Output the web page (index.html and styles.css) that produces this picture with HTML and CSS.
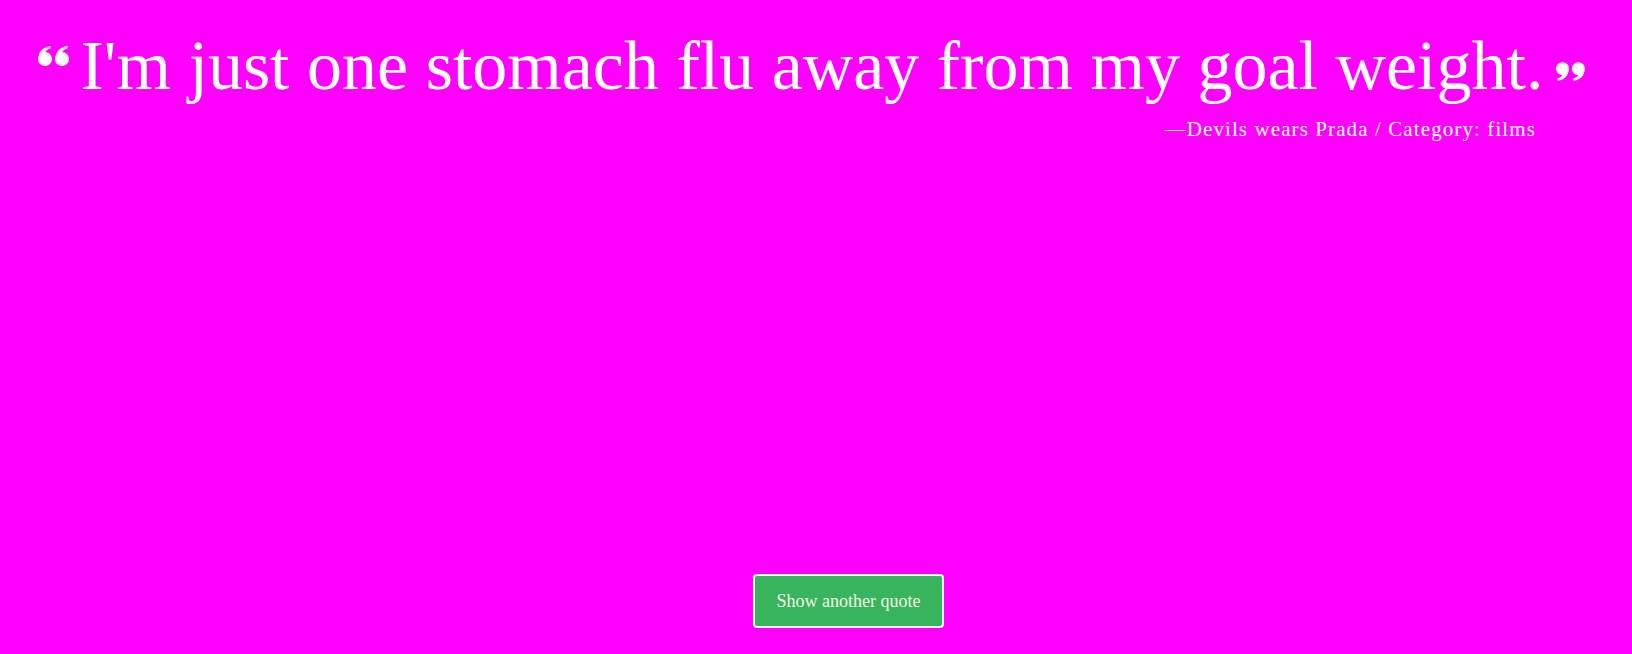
FILE: index.html
```html
<!DOCTYPE html>
<html lang="en">
<head>
<meta charset="utf-8">
<title>Random Quote</title>
<link rel="stylesheet" href="styles.css">
</head>
<body>
<main class="page">
  <blockquote class="quote">
    <p class="quote-text"><svg class="mark mark-left" viewBox="0 0 31 20" width="31" height="20" aria-hidden="true"><g fill="#fff"><circle cx="7" cy="13" r="7"/><path d="M0.4 12.5C0.6 5.5 5 1.2 12.5 0L12.8 2.2C8.5 3.6 6 6.4 5.8 9.5Z"/><circle cx="24" cy="13" r="7"/><path d="M17.4 12.5C17.6 5.5 22 1.2 29.5 0L29.8 2.2C25.5 3.6 23 6.4 22.8 9.5Z"/></g></svg><span class="quote-body">I'm just one stomach flu away from my goal weight.</span><svg class="mark mark-right" viewBox="0 0 31 20" width="29" height="21" aria-hidden="true"><g fill="#fff" transform="rotate(180 15.5 10)"><circle cx="7" cy="13" r="7"/><path d="M0.4 12.5C0.6 5.5 5 1.2 12.5 0L12.8 2.2C8.5 3.6 6 6.4 5.8 9.5Z"/><circle cx="24" cy="13" r="7"/><path d="M17.4 12.5C17.6 5.5 22 1.2 29.5 0L29.8 2.2C25.5 3.6 23 6.4 22.8 9.5Z"/></g></svg></p>
    <footer class="quote-source">—Devils wears Prada / Category: films</footer>
  </blockquote>
  <div class="actions">
    <button class="btn-next" type="button">Show another quote</button>
  </div>
</main>
</body>
</html>
```
FILE: styles.css
```css
html, body {
  margin: 0;
  padding: 0;
  height: 100%;
}
body {
  background: #ff00ff;
  color: #ffffff;
  font-family: "Liberation Serif", "Times New Roman", serif;
}
.page {
  height: 100vh;
  display: flex;
  flex-direction: column;
  box-sizing: border-box;
  padding-bottom: 26px;
}
.quote {
  margin: 0;
  padding: 0;
}
.quote-text {
  margin: 0;
  padding-top: 24px;
  padding-right: 9px;
  font-size: 70px;
  line-height: 84px;
  text-align: center;
  white-space: nowrap;
}
.mark {
  display: inline-block;
}
.mark-left {
  vertical-align: 23px;
  margin-right: 12px;
}
.mark-right {
  vertical-align: 7px;
  margin-left: 13px;
}
.quote-source {
  font-size: 21px;
  line-height: 24px;
  padding-top: 9px;
  text-align: right;
  padding-right: 96px;
  letter-spacing: 1.1px;
}
.actions {
  margin-top: auto;
  display: flex;
  justify-content: center;
  padding-left: 65px;
}
.btn-next {
  width: 191px;
  height: 54px;
  background: #38b45c;
  color: #f4f6e4;
  border: 2px solid #ffffff;
  border-radius: 4px;
  font-family: "Liberation Serif", "Times New Roman", serif;
  font-size: 18px;
  padding: 0;
  cursor: pointer;
}
```
